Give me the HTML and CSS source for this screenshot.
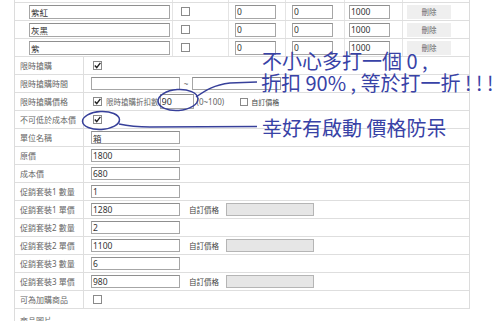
FILE: index.html
```html
<!DOCTYPE html>
<html lang="zh-Hant">
<head>
<meta charset="utf-8">
<title>商品設定</title>
<link rel="stylesheet" href="styles.css">
</head>
<body>
<div class="page">
  <div class="colors">
    <div class="crow partial">
      <div class="c"></div><div class="c"></div><div class="c"></div><div class="c"></div><div class="c"></div><div class="c"></div>
    </div>
    <div class="crow">
      <div class="c c-name"><input class="inp name" value="紫紅"></div>
      <div class="c c-chk"><span class="cb"></span></div>
      <div class="c c-n1"><input class="inp num" value="0"></div>
      <div class="c c-n2"><input class="inp num" value="0"></div>
      <div class="c c-n3"><input class="inp num" value="1000"></div>
      <div class="c c-btn"><button class="btn">刪除</button></div>
    </div>
    <div class="crow">
      <div class="c c-name"><input class="inp name" value="灰黑"></div>
      <div class="c c-chk"><span class="cb"></span></div>
      <div class="c c-n1"><input class="inp num" value="0"></div>
      <div class="c c-n2"><input class="inp num" value="0"></div>
      <div class="c c-n3"><input class="inp num" value="1000"></div>
      <div class="c c-btn"><button class="btn">刪除</button></div>
    </div>
    <div class="crow">
      <div class="c c-name"><input class="inp name" value="紫"></div>
      <div class="c c-chk"><span class="cb"></span></div>
      <div class="c c-n1"><input class="inp num" value="0"></div>
      <div class="c c-n2"><input class="inp num" value="0"></div>
      <div class="c c-n3"><input class="inp num" value="1000"></div>
      <div class="c c-btn"><button class="btn">刪除</button></div>
    </div>
  </div>

  <div class="form">
    <div class="row"><div class="lbl">限時搶購</div><div class="val"><span class="cb on"><svg viewBox="0 0 9 9"><path d="M1.8 4.6 L3.7 6.6 L7.4 1.9"/></svg></span></div></div>
    <div class="row"><div class="lbl">限時搶購時間</div><div class="val"><input class="inp field" value=""><span class="tilde">~</span><input class="inp field" value=""></div></div>
    <div class="row"><div class="lbl">限時搶購價格</div><div class="val"><span class="cb on"><svg viewBox="0 0 9 9"><path d="M1.8 4.6 L3.7 6.6 L7.4 1.9"/></svg></span><span class="sub">限時搶購折扣數</span><input class="inp disc" value="90"><span class="range">(0~100)</span><span class="cb gap"></span><span class="own">自訂價格</span></div></div>
    <div class="row"><div class="lbl">不可低於成本價</div><div class="val"><span class="cb on"><svg viewBox="0 0 9 9"><path d="M1.8 4.6 L3.7 6.6 L7.4 1.9"/></svg></span></div></div>
    <div class="row"><div class="lbl">單位名稱</div><div class="val"><input class="inp field" value="箱"></div></div>
    <div class="row"><div class="lbl">原價</div><div class="val"><input class="inp field" value="1800"></div></div>
    <div class="row"><div class="lbl">成本價</div><div class="val"><input class="inp field" value="680"></div></div>
    <div class="row"><div class="lbl">促銷套裝1 數量</div><div class="val"><input class="inp field" value="1"></div></div>
    <div class="row"><div class="lbl">促銷套裝1 單價</div><div class="val"><input class="inp field" value="1280"><span class="own p">自訂價格</span><input class="inp off" value="" disabled></div></div>
    <div class="row"><div class="lbl">促銷套裝2 數量</div><div class="val"><input class="inp field" value="2"></div></div>
    <div class="row"><div class="lbl">促銷套裝2 單價</div><div class="val"><input class="inp field" value="1100"><span class="own p">自訂價格</span><input class="inp off" value="" disabled></div></div>
    <div class="row"><div class="lbl">促銷套裝3 數量</div><div class="val"><input class="inp field" value="6"></div></div>
    <div class="row"><div class="lbl">促銷套裝3 單價</div><div class="val"><input class="inp field" value="980"><span class="own p">自訂價格</span><input class="inp off" value="" disabled></div></div>
    <div class="row"><div class="lbl">可為加購商品</div><div class="val"><span class="cb"></span></div></div>
  </div>
  <div class="next">商品圖片</div>

  <svg class="marks" viewBox="0 0 500 321" width="500" height="321">
    <ellipse cx="178" cy="100" rx="20" ry="10.5" transform="rotate(-4 178 100)"/>
    <ellipse cx="101" cy="120.5" rx="18.5" ry="9" transform="rotate(-3 101 120.5)"/>
    <path d="M196 97 C206 90 214 85 230 83 L257 82"/>
    <path d="M119 124 C128 126 136 127 150 127 L257 126.5"/>
  </svg>
  <div class="note n1">不小心多打一個 0 ,</div>
  <div class="note n2">折扣 90% , 等於打一折 ! ! !</div>
  <div class="note n3">幸好有啟動 價格防呆</div>
</div>
</body>
</html>
```

FILE: styles.css
```css
* { box-sizing: border-box; }
html, body { margin: 0; padding: 0; background: #fff; }
body {
  font-family: "Noto Sans", "Noto Sans CJK TC", sans-serif;
  font-size: 8px;
  color: #555;
  width: 500px;
  height: 321px;
  overflow: hidden;
}
.page {
  position: relative;
  width: 500px;
  height: 321px;
}
.colors, .form, .next {
  margin-left: 14px;
  width: 456px;
  border-left: 1px solid #dcdcdc;
  border-right: 1px solid #dcdcdc;
}
.crow {
  display: grid;
  grid-template-columns: 158px 56px 57px 59px 58px 66px;
  height: 18px;
  border-bottom: 1px solid #dedede;
}
.crow.partial { height: 3px; }
.c {
  border-right: 1px solid #e4e4e4;
  display: flex;
  align-items: center;
}
.c:last-child { border-right: 0; }
.c-name { padding-left: 14px; }
.c-chk { padding-left: 8px; }
.c-n1, .c-n2 { padding-left: 6px; }
.c-n3 { padding-left: 4px; }
.c-btn { padding-left: 4px; }

.inp {
  font-family: "Noto Sans", "Noto Sans CJK TC", sans-serif;
  font-size: 8.5px;
  color: #333;
  height: 14px;
  border: 1px solid #a6a6a6;
  border-top-color: #8f8f8f;
  background: #fff;
  padding: 0 1px;
  margin: 0;
  outline: none;
  line-height: 12px;
}
.inp.name { width: 141px; }
.inp.num { width: 41px; }
.btn {
  font-family: "Noto Sans", "Noto Sans CJK TC", sans-serif;
  font-size: 7.5px;
  color: #666;
  width: 44px;
  height: 14px;
  border: 0;
  background: #efefef;
  padding: 0;
  margin: 0;
}

.cb {
  display: inline-block;
  width: 9px;
  height: 9px;
  border: 1px solid #8a8a8a;
  background: #fff;
  position: relative;
  flex: none;
}
.cb svg {
  display: block;
  width: 9px;
  height: 9px;
  margin: -1px 0 0 -1px;
}
.cb svg path {
  fill: none;
  stroke: #222;
  stroke-width: 1.4;
}

.row {
  display: grid;
  grid-template-columns: 69px 1fr;
  height: 18px;
  border-bottom: 1px solid #dedede;
}
.lbl {
  border-right: 1px solid #dedede;
  padding-left: 5px;
  display: flex;
  align-items: center;
  color: #666;
  white-space: nowrap;
}
.val {
  display: flex;
  align-items: center;
  padding-left: 7px;
  white-space: nowrap;
}
.val > .cb { margin-left: 2px; }
.inp.field { width: 89px; height: 13px; }
.tilde { width: 12px; text-align: center; color: #666; }
.sub { margin-left: 4px; color: #666; font-size: 7.5px; }
.inp.disc { width: 34px; height: 15px; margin-left: 1px; font-size: 9px; }
.range { margin-left: 3px; color: #666; font-size: 8px; }
.cb.gap { margin-left: 16px; width: 8px; height: 8px; }
.own { margin-left: 3px; color: #444; font-size: 7px; }
.own.p { margin-left: 9px; margin-right: 7px; font-size: 7.5px; }
.inp.off { width: 88px; height: 13px; background: #e6e6e6; border-color: #b5b5b5; }

.next {
  height: 20px;
  padding: 6px 0 0 5px;
  border-right: 0;
  color: #666;
}

.marks {
  position: absolute;
  left: 0;
  top: 0;
  pointer-events: none;
}
.marks ellipse, .marks path {
  fill: none;
  stroke: #37409a;
  stroke-width: 1.5;
}
.note {
  position: absolute;
  font-family: "Noto Sans CJK TC", "Noto Sans", sans-serif;
  font-size: 20px;
  line-height: 16px;
  color: #3842a6;
  white-space: nowrap;
}
.n1 { left: 262px; top: 53px; }
.n2 { left: 261px; top: 75px; }
.n3 { left: 262px; top: 120px; }
```
